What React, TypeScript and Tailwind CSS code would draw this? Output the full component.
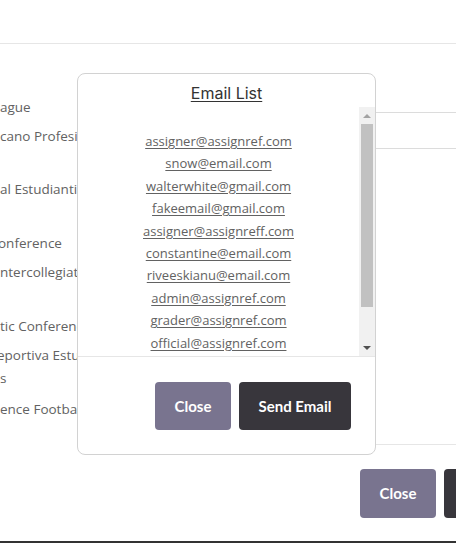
const emails = [
  'assigner@assignref.com',
  'snow@email.com',
  'walterwhite@gmail.com',
  'fakeemail@gmail.com',
  'assigner@assignreff.com',
  'constantine@email.com',
  'riveeskianu@email.com',
  'admin@assignref.com',
  'grader@assignref.com',
  'official@assignref.com',
  'referee@assignref.com',
  'coach@email.com',
];

// visible tails of the league names behind the dialog
const leagues = [
  { text: 'ague', cls: 'mt-[53px]' },
  { text: 'cano Profesional', cls: 'mt-[9px]' },
  { text: 'al Estudiantil', cls: 'mt-[33px]' },
  { text: 'onference', cls: 'mt-[34px] -ml-[2px]' },
  { text: 'ntercollegiate', cls: 'mt-[9px]' },
  { text: 'tic Conference', cls: 'mt-[34px]' },
  { text: 'eportiva Estudiantil', cls: 'mt-[9px] -ml-[3px]' },
  { text: 's', cls: 'mt-[3px]' },
  { text: 'ence Football', cls: 'mt-[11px]' },
];

function Scrollbar() {
  return (
    <div className="flex w-[16px] shrink-0 flex-col bg-[#f1f1f1]">
      <div className="flex h-[17px] items-center justify-center">
        <div className="h-0 w-0 border-x-[4px] border-b-[4px] border-x-transparent border-b-[#a3a3a3]" />
      </div>
      <div className="mx-[2px] h-[183px] bg-[#c1c1c1]" />
      <div className="flex-1" />
      <div className="flex h-[17px] items-center justify-center">
        <div className="h-0 w-0 border-x-[4px] border-t-[4px] border-x-transparent border-t-[#505050]" />
      </div>
    </div>
  );
}

export default function App() {
  return (
    <div className="relative h-[543px] w-[456px] overflow-hidden bg-white font-['Open_Sans',sans-serif]">
      {/* page behind the dialog */}
      <div className="h-[44px] border-b border-[#e6e6e6]" />
      <div className="flex h-[401px]">
        <div className="flex w-[220px] flex-col overflow-hidden whitespace-nowrap text-[13.5px] leading-[20px] text-[#626262]">
          {leagues.map((l, i) => (
            <div key={i} className={l.cls}>
              {l.text}
            </div>
          ))}
        </div>
        <div className="flex flex-1 flex-col">
          <div className="mt-[68px] h-[37px] border-y border-[#dcdcdc]" />
          <div className="flex-1" />
          <div className="ml-[40px] border-b border-[#e6e6e6]" />
        </div>
      </div>
      <div className="flex h-[98px] justify-end gap-2 border-b-2 border-[#333] pt-[24px]">
        <button className="h-[49px] w-[76px] rounded-[4px] bg-[#79748f] font-['Lato',sans-serif] text-[15px] font-bold text-white">
          Close
        </button>
        <button className="-mr-[100px] h-[49px] w-[112px] rounded-[4px] bg-[#38363c] font-['Lato',sans-serif] text-[15px] font-bold text-white">
          Send Email
        </button>
      </div>

      {/* email list dialog */}
      <div className="absolute left-[77px] top-[73px] flex w-[299px] flex-col rounded-lg border border-[#d2d2d2] bg-white">
        <div className="h-[33px] pt-[9px] text-center font-['Inter',sans-serif] text-[16px] leading-[20px] text-[#333]">
          <span className="underline underline-offset-2">Email List</span>
        </div>
        <div className="flex h-[250px] border-b border-[#e6e6e6]">
          <div className="flex-1 overflow-hidden">
            <div className="flex flex-col items-center pt-[23px]">
              {emails.map((e) => (
                <a
                  key={e}
                  href="#"
                  className="text-[13px] leading-[22.4px] text-[#626262] underline underline-offset-2"
                >
                  {e}
                </a>
              ))}
            </div>
          </div>
          <Scrollbar />
        </div>
        <div className="flex justify-end gap-2 px-6 pt-[25px] pb-[24px]">
          <button className="h-[48px] w-[76px] rounded-[4px] bg-[#79748f] font-['Lato',sans-serif] text-[15px] font-bold text-white">
            Close
          </button>
          <button className="h-[48px] w-[112px] rounded-[4px] bg-[#38363c] font-['Lato',sans-serif] text-[15px] font-bold text-white">
            Send Email
          </button>
        </div>
      </div>
    </div>
  );
}
